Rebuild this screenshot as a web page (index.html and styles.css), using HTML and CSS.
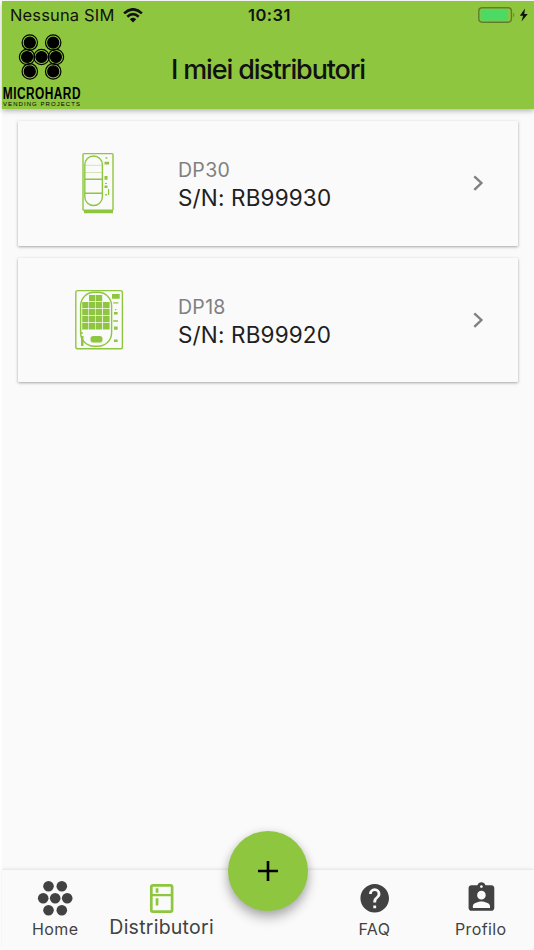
FILE: index.html
```html
<!DOCTYPE html>
<html lang="it">
<head>
<meta charset="utf-8">
<title>I miei distributori</title>
<link rel="stylesheet" href="styles.css">
</head>
<body>
<div class="app">
  <header class="header">
    <div class="status">
      <div class="carrier"><span class="sim">Nessuna SIM</span>
        <svg class="wifi" width="20" height="15" viewBox="0 0 20 15"><g fill="none" stroke="#111" stroke-width="2.6"><path d="M1.1 5.4Q10-2.8 18.9 5.4"/><path d="M4.3 8.8Q10 3.6 15.7 8.8"/></g><path d="M6.8 11.2Q10 8.3 13.2 11.2L10 14.4Z" fill="#111"/></svg>
      </div>
      <span class="time">10:31</span>
      <svg class="battery" width="51" height="16" viewBox="0 0 51 16"><rect x=".8" y=".8" width="32.6" height="14.4" rx="3.4" fill="none" stroke="#5d7f2d" stroke-width="1.4"/><rect x="2.6" y="2.5" width="27.4" height="11" rx="1.5" fill="#4cd964"/><path d="M35.3 5.4q2 2.6 0 5.2z" fill="#5d7f2d"/><path d="M47 1.4L41.8 8.7h3.3l-1.6 5.8 6.3-7.6h-3.5z" fill="#111"/></svg>
    </div>
    <div class="bar">
      <svg class="logo" width="82" height="76" viewBox="0 0 82 76">
        <g fill="#000" stroke="#000" stroke-width="1.2" transform="translate(-.5 .3)">
          <g fill="none"><circle cx="28.3" cy="9.3" r="7.7"/><circle cx="51.7" cy="9.3" r="7.7"/><circle cx="25.6" cy="23.7" r="7.7"/><circle cx="40" cy="23.7" r="7.7"/><circle cx="54.4" cy="23.7" r="7.7"/><circle cx="28.3" cy="38.1" r="7.7"/><circle cx="51.7" cy="38.1" r="7.7"/></g>
          <circle cx="28.3" cy="9.3" r="5.5"/><circle cx="51.7" cy="9.3" r="5.5"/><circle cx="25.6" cy="23.7" r="5.5"/><circle cx="40" cy="23.7" r="5.5"/><circle cx="54.4" cy="23.7" r="5.5"/><circle cx="28.3" cy="38.1" r="5.5"/><circle cx="51.7" cy="38.1" r="5.5"/>
        </g>
        <text class="brand" transform="translate(.8 66) scale(.7 1)" x="0" y="0" textLength="111">MICROHARD</text>
        <text class="tagline" x="1" y="72.800" textLength="77">VENDING PROJECTS</text>
      </svg>
      <h1 class="title">I miei distributori</h1>
    </div>
  </header>
  <main class="list">
    <article class="card">
      <svg class="machine" width="80" height="80" viewBox="60 143 80 80"><g fill="none" stroke="#8ec63f" stroke-width="1.4"><rect x="83" y="153.6" width="30" height="56.6" rx="1"/><rect x="84.8" y="156" width="17.6" height="49.5" rx="8.8"/><path d="M85 179.2h17.5M85 193.2h17.5"/><path d="M85 165.3h17.5M85 172.5h17.5" stroke-width=".7" opacity=".55"/></g><path fill="#8ec63f" d="M84 210h29v3.3H84zM105.5 157.3h1.8v1.4h-1.8zM104.5 161.8h4.6v2.6h-4.6zM104.5 176h3v3.7h-3zM105 183h2v1h-2zM104.5 185.4h3v2.6h-3zM108 189h1.2v6H108zM105.2 194h1.8v1.5h-1.8z"/></svg>
      <div class="info"><span class="model">DP30</span><span class="serial">S/N: RB99930</span></div>
      <svg class="chevron" width="14" height="18" viewBox="0 0 14 18"><path d="M2.3 2.3L9.4 9l-7.1 6.9" fill="none" stroke="#808080" stroke-width="2.4"/></svg>
    </article>
    <article class="card">
      <svg class="machine" width="80" height="80" viewBox="60 280 80 80"><g fill="none" stroke="#8ec63f" stroke-width="1.4"><rect x="75.8" y="290.6" width="46.6" height="58.2" rx="1.8"/><rect x="80.6" y="292.3" width="31" height="54" rx="13.5"/></g><g fill="#8ec63f"><path d="M89 295h6.3v6.200H89zM95.900 295h6.3v6.200H95.900zM82.2 302h6.200v6.300h-6.200zM89 302h6.3v6.300H89zM95.900 302h6.3v6.300H95.900zM103 302h6.6v6.300h-6.6zM82.2 309h6.200v6.300h-6.200zM89 309h6.3v6.300H89zM95.900 309h6.3v6.300H95.900zM103 309h6.6v6.300h-6.6zM82.2 316h6.200v6.300h-6.200zM89 316h6.3v6.300H89zM95.900 316h6.3v6.300H95.900zM103 316h6.6v6.300h-6.6zM82.2 323h6.200v6.6h-6.200zM89 323h6.3v6.6H89zM95.900 323h6.3v6.6H95.900zM103 323h6.6v6.6h-6.6zM112 294h7.7v4.7H112zM113.2 302.3h5.2v1.3h-5.2zM115 309h1.3v1.3H115zM114 312h3.6v2.6H114zM113.2 320.2h4.8v1.6h-4.8zM114 326.4h3.6v3.3H114zM114 339.5h3.6v2.6H114zM81.2 332h1.4v2h-1.4zM81 336h2.5v10H81z"/><rect x="90.5" y="336" width="12" height="6.6" rx="2.8"/></g></svg>
      <div class="info"><span class="model">DP18</span><span class="serial">S/N: RB99920</span></div>
      <svg class="chevron" width="14" height="18" viewBox="0 0 14 18"><path d="M2.3 2.3L9.4 9l-7.1 6.9" fill="none" stroke="#808080" stroke-width="2.4"/></svg>
    </article>
  </main>
  <nav class="nav">
    <a class="tab"><svg width="36" height="36" viewBox="0 0 36 36" fill="#424242"><circle cx="11.5" cy="6.3" r="5.3"/><circle cx="24.8" cy="6.3" r="5.3"/><circle cx="6.2" cy="18.2" r="5.3"/><circle cx="18.2" cy="18.2" r="5.3"/><circle cx="30.2" cy="18.2" r="5.3"/><circle cx="11.5" cy="30.2" r="5.3"/><circle cx="24.8" cy="30.2" r="5.3"/></svg><span class="label">Home</span></a>
    <a class="tab active"><svg width="36" height="36" viewBox="0 0 36 36"><rect x="7.3" y="5.3" width="20.8" height="26.4" rx="1.6" fill="none" stroke="#8ec63f" stroke-width="2.7"/><path d="M7.500 15.1h21" stroke="#8ec63f" stroke-width="2.3"/><path d="M11.700 8.2h2.7v4.5h-2.700zM11.700 18.3h2.7v7.1h-2.700z" fill="#8ec63f"/></svg><span class="label">Distributori</span></a>
    <span class="gap"></span>
    <a class="tab"><svg width="36" height="36" viewBox="0.3 0.3 30.2 30.2"><g transform="translate(4 3.6)" fill="#424242"><path d="M12 0C5.4 0 0 5.4 0 12s5.4 12 12 12 12-5.400 12-12S18.600 0 12 0zM13.200 20.400h-2.400V18h2.400zM15.680 11.100l-1.080 1.100c-.860.880-1.400 1.600-1.400 3.400h-2.400V15c0-1.320.540-2.520 1.400-3.400l1.490-1.510c.440-.430.710-1.030.710-1.690a2.400 2.400 0 0 0-4.800 0H7.200a4.800 4.800 0 0 1 9.600 0c0 1.060-.430 2.010-1.120 2.700z"/></g></svg><span class="label">FAQ</span></a>
    <a class="tab"><svg width="36" height="36" viewBox="-.9 -.6 25.2 25.200"><path fill="#424242" d="M19 3h-4.180C14.400 1.840 13.300 1 12 1s-2.400.840-2.820 2H5c-1.100 0-2 .900-2 2v14c0 1.100.900 2 2 2h14c1.100 0 2-.900 2-2V5c0-1.100-.900-2-2-2zm-7 0c.550 0 1 .450 1 1s-.450 1-1 1-1-.450-1-1 .450-1 1-1zm0 4c1.660 0 3 1.340 3 3s-1.340 3-3 3-3-1.340-3-3 1.340-3 3-3zm6 12H6v-1.400c0-2 4-3.100 6-3.100s6 1.100 6 3.100V19z"/></svg><span class="label">Profilo</span></a>
    <button class="fab" aria-label="Aggiungi"><svg width="20" height="20" viewBox="0 0 20 20"><path d="M10 0v20M0 10h20" stroke="#000" stroke-width="2.600"/></svg></button>
  </nav>
</div>
</body>
</html>
```
FILE: styles.css
```css
* { box-sizing: border-box; }
body { margin: 0; background: #fff; font-family: Inter, "Liberation Sans", sans-serif; }
.app { width: 532px; height: 949px; margin: 1px 0 0 2px; display: flex; flex-direction: column; background: #fafafa; }
svg { display: block; flex: none; }
.header { height: 108px; background: #8ec63f; color: #111; box-shadow: 0 2px 5px rgba(0,0,0,.28); }
.status { height: 28px; display: grid; grid-template-columns: 1fr auto 1fr; align-items: center; padding: 0 5px 0 8px; }
.carrier { display: flex; align-items: center; gap: 9px; }
.sim { font-size: 16.5px; letter-spacing: .15px; white-space: nowrap; }
.time { font-size: 16.500px; font-weight: 600; letter-spacing: .5px; }
.battery { justify-self: end; }
.bar { height: 80px; display: grid; grid-template-columns: 82px 1fr 82px; grid-template-rows: 80px; align-items: center; }
.logo { align-self: start; margin-top: 4px; }
.brand { font: bold 17px "Liberation Sans", sans-serif; }
.tagline { font: 6px "Liberation Sans", sans-serif; }
.title { margin: 0; font-size: 27px; font-weight: 450; letter-spacing: -1.15px; text-align: center; white-space: nowrap; }
.list { flex: 1; padding: 12px 16px; display: flex; flex-direction: column; gap: 12px; }
.card { height: 124.5px; display: flex; align-items: center; padding: 0 32px 0 42px; background: #fafafa; border-radius: 1px; box-shadow: 0 1px 3px rgba(0,0,0,.35); }
.info { flex: 1; margin-left: 38px; margin-top: 2px; display: flex; flex-direction: column; }
.model { font-size: 19.500px; line-height: 28px; letter-spacing: .3px; color: #808080; }
.serial { font-size: 22.500px; line-height: 28px; letter-spacing: .15px; color: #202020; }
.nav { position: relative; height: 80px; display: grid; grid-template-columns: repeat(5, 1fr); background: #fafafa; box-shadow: 0 -1px 3px rgba(0,0,0,.1); }
.tab { display: flex; flex-direction: column; align-items: center; padding-top: 10px; color: #424242; }
.label { margin-top: 2px; font-size: 16px; line-height: 22px; letter-spacing: .4px; white-space: nowrap; }
.active .label { margin-top: 0; font-size: 19.500px; letter-spacing: .25px; }
.fab { position: absolute; left: 226px; top: -39px; width: 80px; height: 80px; padding: 0; border: 0; border-radius: 50%; background: #8ec63f; display: flex; align-items: center; justify-content: center; box-shadow: 0 7px 12px rgba(0,0,0,.27), 0 1px 8px rgba(0,0,0,.12); }
```
